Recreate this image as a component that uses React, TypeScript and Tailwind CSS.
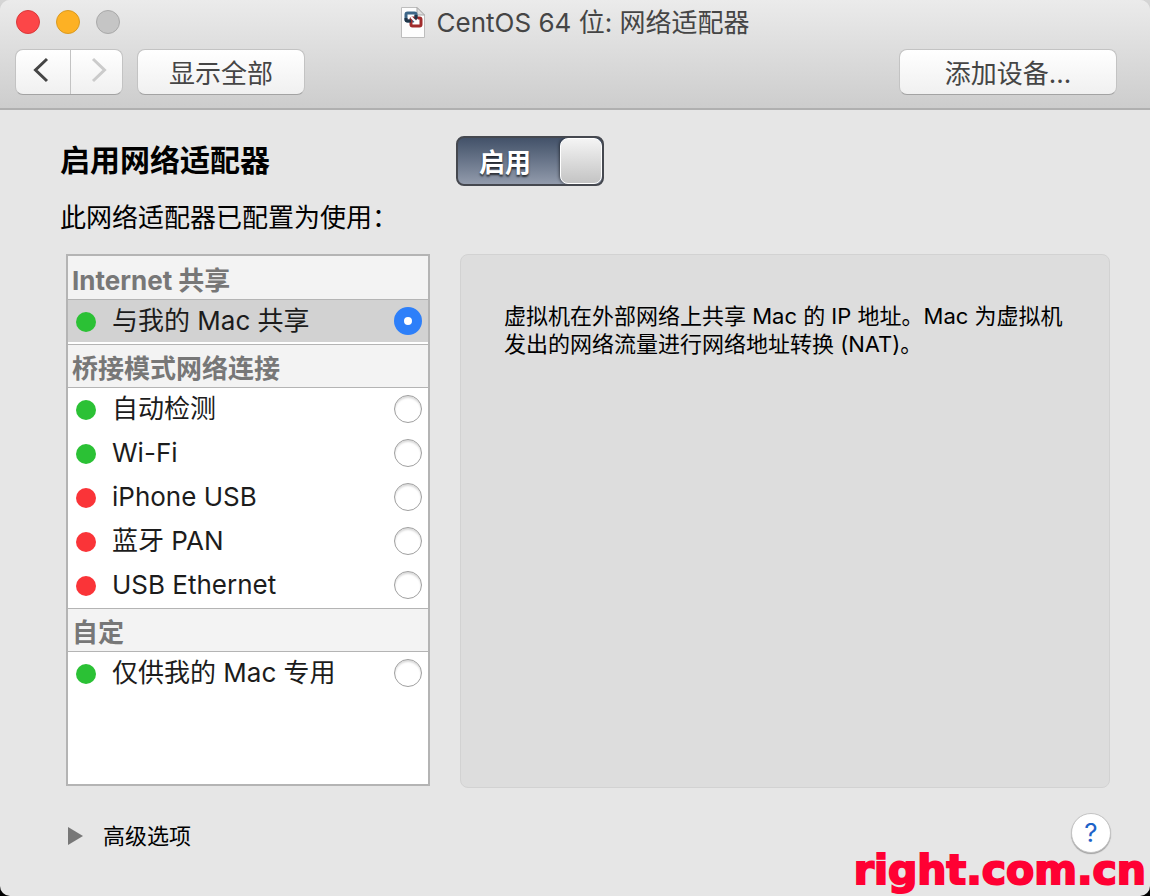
import { useState } from 'react';

type Status = 'up' | 'down';

interface Adapter {
    id: string;
    label: string;
    status: Status;
}

interface AdapterGroup {
    title: string;
    adapters: Adapter[];
}

const groups: AdapterGroup[] = [
    {
        title: 'Internet 共享',
        adapters: [{ id: 'nat', label: '与我的 Mac 共享', status: 'up' }],
    },
    {
        title: '桥接模式网络连接',
        adapters: [
            { id: 'auto', label: '自动检测', status: 'up' },
            { id: 'wifi', label: 'Wi-Fi', status: 'up' },
            { id: 'iphone', label: 'iPhone USB', status: 'down' },
            { id: 'bluetooth', label: '蓝牙 PAN', status: 'down' },
            { id: 'ethernet', label: 'USB Ethernet', status: 'down' },
        ],
    },
    {
        title: '自定',
        adapters: [{ id: 'host', label: '仅供我的 Mac 专用', status: 'up' }],
    },
];

const toolbarButton =
    'h-[46px] rounded-lg border border-[#c3c3c3] border-b-[#a3a3a3] bg-linear-to-b from-white to-[#f0f0f0] pt-1 text-[26px] leading-8 text-[#454545]';

const DocumentIcon = () => (
    <svg width="24" height="31" viewBox="0 0 24 31" fill="none" aria-hidden="true">
        <path d="M0.500 0.500H16L23.500 8V30.500H0.500z" fill="#fdfdfd" stroke="#bdbdbd" />
        <path d="M16 0.500V8h7.500z" fill="#dedede" stroke="#a5a5a5" />
        <rect x="5" y="6" width="10" height="8" rx="1.500" stroke="#3d6688" strokeWidth="3" />
        <rect x="10" y="11" width="10" height="8" rx="1.500" stroke="#a12c2c" strokeWidth="3" />
        <path d="M5 11v1.500q0 1.500 1.500 1.500H10M15 8v4" stroke="#203548" strokeWidth="3" />
        <path d="M10 10l5 5" stroke="#fff" strokeWidth="2" />
        <path d="M11.500 17h5.500v-5.500z" fill="#fff" />
    </svg>
);

const Toolbar = () => (
    <header className="h-[110px] border-b-2 border-[#b0b0b0] bg-linear-to-b from-[#ebebeb] to-[#cdcdcd]">
        <div className="grid h-11 grid-cols-[1fr_auto_1fr] items-center px-4">
            <div className="flex gap-4">
                <button aria-label="关闭" className="size-6 rounded-full border border-[#d9393a] bg-[#fc4648]" />
                <button aria-label="最小化" className="size-6 rounded-full border border-[#d99a22] bg-[#fdb124]" />
                <button aria-label="缩放" className="size-6 rounded-full border border-[#a9a9a9] bg-[#c5c5c5]" />
            </div>
            <div className="flex items-center gap-3">
                <DocumentIcon />
                <h1 className="pt-0.5 text-[26px] leading-8 text-[#454545]">CentOS 64 位: 网络适配器</h1>
            </div>
        </div>
        <div className="flex items-center pt-[5px] pr-[33px] pl-[15px]">
            <div className="flex h-[46px] w-[108px] overflow-hidden rounded-lg border border-[#c3c3c3] border-b-[#a3a3a3] bg-linear-to-b from-white to-[#f0f0f0]">
                <button aria-label="后退" className="flex w-[55px] items-center justify-center border-r border-[#c3c3c3] pr-1 pb-1">
                    <svg width="16" height="26" viewBox="0 0 16 26" fill="none" stroke="#454545" strokeWidth="3">
                        <path d="M14 2L2.500 13L14 24" />
                    </svg>
                </button>
                <button aria-label="前进" disabled className="flex flex-1 items-center justify-center pb-1 pl-1">
                    <svg width="16" height="26" viewBox="0 0 16 26" fill="none" stroke="#cbcbcb" strokeWidth="3">
                        <path d="M2 2L13.500 13L2 24" />
                    </svg>
                </button>
            </div>
            <button className={`${toolbarButton} ml-3.5 w-[168px]`}>显示全部</button>
            <button className={`${toolbarButton} ml-auto w-[218px]`}>添加设备...</button>
        </div>
    </header>
);

const EnableSwitch = () => {
    const [enabled, setEnabled] = useState(true);

    return (
        <label className={`flex h-[50px] w-[148px] cursor-pointer items-stretch overflow-hidden rounded-lg border-2 border-[#45484f] ${enabled ? 'bg-linear-to-b from-[#435269] to-[#929bac]' : 'flex-row-reverse bg-linear-to-b from-[#999] to-[#ccc]'}`}>
            <input
                type="checkbox"
                role="switch"
                aria-label="启用网络适配器"
                className="sr-only"
                checked={enabled}
                onChange={(e) => setEnabled(e.target.checked)}
            />
            <span className="flex-1 pr-2 text-center text-[26px] leading-[50px] font-bold text-white text-shadow-[0_2px_2px_rgb(0_0_0/0.7)]">
                {enabled ? '启用' : '停用'}
            </span>
            <span className="w-[42px] rounded-lg border border-white bg-linear-to-b from-[#f4f4f4] to-[#c4c4c4] shadow-[-1px_0_3px_rgba(0,0,0,0.5)]" />
        </label>
    );
};

interface AdapterRowProps {
    adapter: Adapter;
    selected: boolean;
    onSelect: (id: string) => void;
}

const AdapterRow = ({ adapter, selected, onSelect }: AdapterRowProps) => (
    <label className={`flex h-11 items-center border-b-2 border-white pr-1.5 pl-2 ${selected ? 'bg-[#d2d2d2]' : 'bg-white'}`}>
        <span className={`mt-0.5 size-5 rounded-full ${adapter.status === 'up' ? 'bg-[#2bc135]' : 'bg-[#fa3438]'}`} />
        <span className="ml-4 flex-1 text-[26px] leading-8 text-[#1c1c1c]">{adapter.label}</span>
        <input
            type="radio"
            name="adapter"
            checked={selected}
            onChange={() => onSelect(adapter.id)}
            className="size-7 appearance-none rounded-full border border-[#a0a0a0] bg-white shadow-[inset_0_2px_2px_rgba(0,0,0,0.15)] checked:border-10 checked:border-[#2d7ff9] checked:shadow-none"
        />
    </label>
);

const AdapterList = () => {
    const [selected, setSelected] = useState('nat');

    return (
        <div className="mb-0.5 w-[364px] shrink-0 border-2 border-[#b4b4b4] bg-white">
            {groups.map((group) => (
                <section key={group.title} className="border-t border-[#b4b4b4] first:border-[#f3f3f3]">
                    <h3 className="h-[43px] border-b border-[#b4b4b4] bg-[#f3f3f3] pl-1 text-[26px] leading-[47px] font-bold text-[#777]">
                        {group.title}
                    </h3>
                    {group.adapters.map((adapter) => (
                        <AdapterRow
                            key={adapter.id}
                            adapter={adapter}
                            selected={selected === adapter.id}
                            onSelect={setSelected}
                        />
                    ))}
                </section>
            ))}
        </div>
    );
};

export default function App() {
    return (
        <div className="min-h-screen bg-linear-to-b from-[#d5d5d5] to-black font-['Inter','Noto_Sans_CJK_SC',sans-serif]">
            <div className="relative flex min-h-screen flex-col overflow-hidden rounded-[10px] bg-[#e6e6e6]">
                <Toolbar />

                <main className="flex flex-1 flex-col pt-[26px] pr-10 pl-[60px]">
                    <div className="flex h-[50px] items-start">
                        <h2 className="w-[396px] pt-1 text-[30px] leading-10 font-bold text-black">启用网络适配器</h2>
                        <EnableSwitch />
                    </div>
                    <p className="mt-4 text-[26px] leading-8 text-black">此网络适配器已配置为使用：</p>

                    <div className="mt-5 flex flex-1 gap-[30px] pl-1.5">
                        <AdapterList />
                        <div className="flex-1 rounded-lg border border-[#d2d2d2] bg-[#dddddd] px-[43px] pt-[47px]">
                            <p className="text-[22px] leading-7 text-black">
                                虚拟机在外部网络上共享 Mac 的 IP 地址。Mac 为虚拟机发出的网络流量进行网络地址转换 (NAT)。
                            </p>
                        </div>
                    </div>
                </main>

                <footer className="flex items-center justify-between pt-[25px] pr-[39px] pb-[43px] pl-[68px]">
                    <button className="flex items-center gap-5 pt-1.5 text-[22px] leading-8 text-black">
                        <svg width="15" height="18" viewBox="0 0 15 18" fill="#777" aria-hidden="true">
                            <path d="M0 0L15 9L0 18z" />
                        </svg>
                        高级选项
                    </button>
                    <button aria-label="帮助" className="size-10 rounded-full border border-[#c4c4c4] bg-white text-[26px] leading-8 text-[#1e63c8] shadow-[0_1px_1px_rgba(0,0,0,0.3)]">
                        ?
                    </button>
                </footer>

                <a
                    href="#"
                    className="absolute right-1 bottom-1.5 font-['DejaVu_Sans',sans-serif] text-[41px] leading-10 font-bold text-[#ff0033] [-webkit-text-stroke:2px_#ff0033]"
                >
                    right.com.cn
                </a>
            </div>
        </div>
    );
}
